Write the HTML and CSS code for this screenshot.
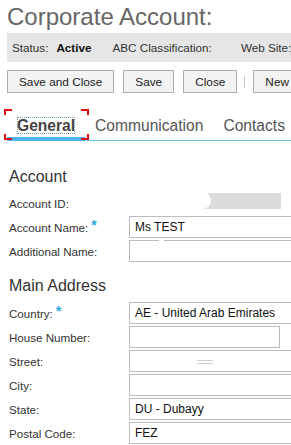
FILE: index.html
```html
<!DOCTYPE html>
<html>
<head>
<meta charset="utf-8">
<link rel="stylesheet" href="styles.css">
</head>
<body>
<div class="page">
  <h1 class="title">Corporate Account:</h1>
  <div class="statusbar">
    <span class="st-label">Status:</span>
    <span class="st-value">Active</span>
    <span class="st-abc">ABC Classification:</span>
    <span class="st-web">Web Site:</span>
  </div>
  <div class="toolbar">
    <button class="btn">Save and Close</button>
    <button class="btn">Save</button>
    <button class="btn">Close</button>
    <span class="sep"></span>
    <button class="btn">New</button>
  </div>
  <div class="tabs">
    <div class="tab active">
      <span class="focus">General</span>
      <span class="marks"><i class="c tl"></i><i class="c tr"></i><i class="c bl"></i><i class="c br"></i></span>
    </div>
    <div class="tab">Communication</div>
    <div class="tab">Contacts</div>
  </div>

  <h2 class="section first">Account</h2>
  <div class="row">
    <div class="label">Account ID:</div>
    <div class="idbox"><span class="blob"></span></div>
  </div>
  <div class="row">
    <div class="label">Account Name:<span class="req">*</span></div>
    <div class="field">Ms TEST</div>
  </div>
  <div class="row">
    <div class="label">Additional Name:</div>
    <div class="field"><span class="gap"></span></div>
  </div>

  <h2 class="section second">Main Address</h2>
  <div class="row">
    <div class="label">Country:<span class="req">*</span></div>
    <div class="field">AE - United Arab Emirates</div>
  </div>
  <div class="row">
    <div class="label">House Number:</div>
    <div class="field short"></div>
  </div>
  <div class="row">
    <div class="label">Street:</div>
    <div class="field"><span class="eq"></span></div>
  </div>
  <div class="row">
    <div class="label">City:</div>
    <div class="field"></div>
  </div>
  <div class="row">
    <div class="label">State:</div>
    <div class="field">DU - Dubayy</div>
  </div>
  <div class="row">
    <div class="label">Postal Code:</div>
    <div class="field">FEZ</div>
  </div>
</div>
</body>
</html>
```

FILE: styles.css
```css
html, body {
  margin: 0;
  padding: 0;
  background: #fff;
  overflow: hidden;
}
body {
  font-family: "Liberation Sans", Arial, sans-serif;
  color: #333;
}
.page {
  width: 291px;
  height: 445px;
  overflow: hidden;
}
.title {
  margin: 0 0 0 7px;
  padding-top: 3px;
  height: 30px;
  font-size: 24px;
  line-height: 28px;
  font-weight: normal;
  color: #666;
  white-space: nowrap;
}
.statusbar {
  margin-left: 7px;
  width: 320px;
  height: 29px;
  background: #e6e6e6;
  display: flex;
  align-items: center;
  font-size: 11.7px;
  color: #333;
  white-space: nowrap;
}
.st-label { margin-left: 5px; }
.st-value { margin-left: 8px; font-weight: bold; color: #111; }
.st-abc { margin-left: 21px; }
.st-web { margin-left: 29px; }
.toolbar {
  margin: 8px 0 0 7px;
  display: flex;
  align-items: center;
  width: 320px;
  white-space: nowrap;
}
.btn {
  height: 23px;
  padding: 0 11px;
  border: 1px solid #acacac;
  background: #f3f3f3;
  font-family: "Liberation Sans", Arial, sans-serif;
  font-size: 11.8px;
  color: #222;
  margin: 0 9px 0 0;
  border-radius: 0;
}
.sep {
  width: 1px;
  height: 12px;
  background: #c8c8c8;
  margin: 0 8px 0 -2px;
}
.tabs {
  margin: 23px 0 0 7px;
  display: flex;
  border-bottom: 1px solid #6cbfea;
  width: 320px;
  white-space: nowrap;
}
.tab {
  position: relative;
  padding: 0 10px 1px;
  font-size: 15.6px;
  line-height: 20px;
  color: #555;
  border-bottom: 4px solid transparent;
  margin-bottom: -1px;
}
.tab.active {
  border-bottom-color: #4db3ea;
  font-weight: bold;
  color: #444;
}
.focus {
  outline: 1px dotted #6a9c9c;
  outline-offset: -1px;
}
.marks {
  position: absolute;
  top: -7px;
  left: -3px;
  right: -4px;
  bottom: -3px;
}
.c {
  position: absolute;
  width: 6px;
  height: 4px;
  border: 0 solid #e01010;
}
.c.tl { top: 0; left: 0; border-top-width: 2px; border-left-width: 2px; }
.c.tr { top: 0; right: 0; border-top-width: 2px; border-right-width: 2px; }
.c.bl { bottom: 0; left: 0; border-bottom-width: 2px; border-left-width: 2px; }
.c.br { bottom: 0; right: 0; border-bottom-width: 2px; border-right-width: 2px; }

.section {
  margin: 0 0 0 9px;
  font-size: 16px;
  line-height: 20px;
  font-weight: normal;
  color: #333;
}
.section.first { margin-top: 26px; margin-bottom: 4px; }
.section.second { margin-top: 13px; margin-bottom: 5px; }
.row {
  display: flex;
  align-items: center;
  height: 24px;
  padding-left: 9px;
}
.label {
  width: 120px;
  flex: none;
  font-size: 11.6px;
  color: #333;
  white-space: nowrap;
}
.req {
  color: #2aa7e0;
  font-weight: bold;
  font-size: 14px;
  margin-left: 3px;
  position: relative;
  top: -2px;
}
.field {
  position: relative;
  flex: none;
  box-sizing: border-box;
  width: 180px;
  height: 22px;
  border: 1px solid #bcbcbc;
  background: #fff;
  font-size: 12px;
  line-height: 20px;
  padding-left: 5px;
  color: #111;
  white-space: nowrap;
}
.field.short { width: 151px; }
.idbox {
  position: relative;
  flex: none;
  align-self: flex-start;
  margin-top: 2px;
  width: 152px;
  height: 16px;
  background: #dcdcdc;
}
.blob {
  position: absolute;
  left: 0;
  top: -1px;
  width: 82px;
  height: 17px;
  background: #fff;
  border-radius: 0 9px 9px 0;
}
.gap {
  position: absolute;
  top: -1px;
  left: 29px;
  width: 5px;
  height: 1px;
  background: #fff;
}
.eq {
  display: inline-block;
  vertical-align: middle;
  width: 16px;
  height: 2px;
  border-top: 1px solid #cfcfcf;
  border-bottom: 1px solid #cfcfcf;
  margin-left: 62px;
}
```
